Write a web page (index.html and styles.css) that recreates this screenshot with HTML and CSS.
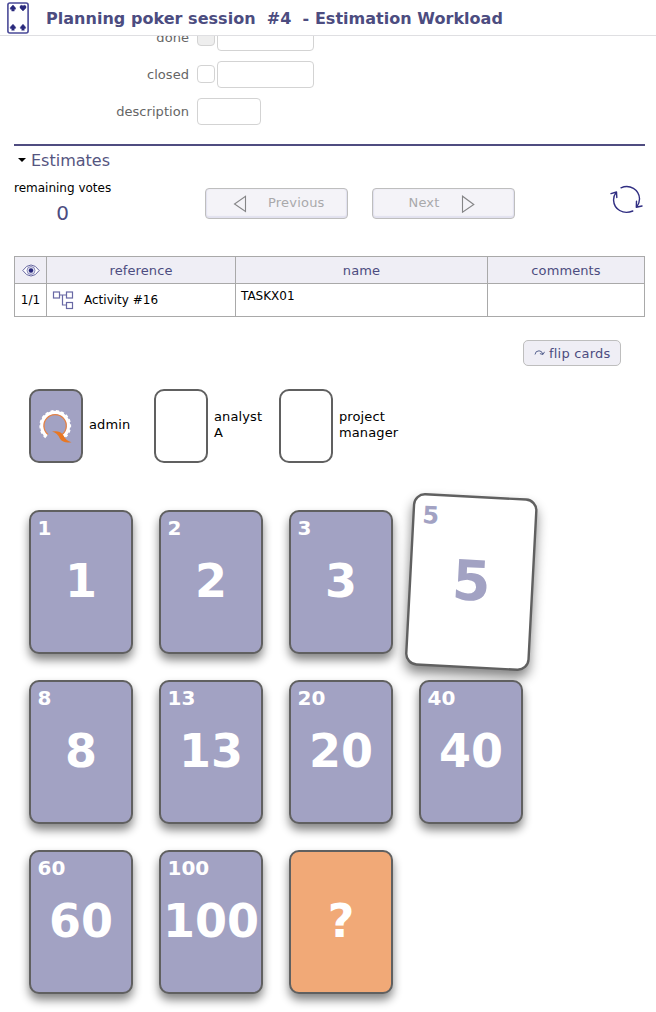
FILE: index.html
```html
<!DOCTYPE html>
<html lang="en">
<head>
<meta charset="utf-8">
<title>Planning poker session</title>
<link rel="stylesheet" href="styles.css">
</head>
<body>
<header class="topbar">
  <svg class="logo" width="22" height="32" viewBox="0 0 22 32">
    <rect x="0.9" y="1" width="20.2" height="30" rx="2" fill="#fff" stroke="#4a4a98" stroke-width="1.6"/>
    <g fill="#28287c" stroke="#28287c" stroke-width=".5" stroke-linejoin="round">
      <path d="M6 3 8.6 6Q9 7.7 6.8 7.6L7.4 9H4.6L5.2 7.6Q2.8 7.7 3.2 6Z"/>
      <path d="M16 9 13.1 6Q12.4 3.7 14.5 3.3 15.6 3.3 16 4.2 16.4 3.3 17.5 3.3 19.6 3.7 18.9 6Z"/>
      <path d="M6 22.2 8.6 25.2Q9 26.9 6.8 26.8L7.4 28.2H4.6L5.2 26.8Q2.8 26.9 3.2 25.2Z"/>
      <path d="M16 22.2 18.6 25.2Q19 26.9 16.8 26.8L17.4 28.2H14.6L15.2 26.8Q12.8 26.9 13.4 25.2Z"/>
    </g>
  </svg>
  <h1 class="title">Planning poker session&nbsp; #4&nbsp; - Estimation Workload</h1>
</header>
<main class="page">
  <section class="form">
    <div class="field"><label>done</label><span class="check off"></span><span class="input wide"></span></div>
    <div class="field"><label>closed</label><span class="check"></span><span class="input wide"></span></div>
    <div class="field"><label>description</label><span class="input"></span></div>
  </section>
  <section class="estimates">
    <h2 class="heading"><span class="caret"></span>Estimates</h2>
    <div class="toolbar">
      <div class="votes"><div class="votes-label">remaining votes</div><div class="count">0</div></div>
      <button class="nav prev"><svg width="14" height="18" viewBox="0 0 14 18"><path d="M12.5 1.2V16.5L1.5 9Z" fill="none" stroke="#858587" stroke-width="1.1"/></svg><span>Previous</span></button>
      <button class="nav next"><span>Next</span><svg width="14" height="18" viewBox="0 0 14 18"><path d="M1.5 1.2V17.2L12.8 9.5Z" fill="none" stroke="#858587" stroke-width="1.1"/></svg></button>
      <svg class="refresh" width="34" height="30" viewBox="0 0 34 30" fill="none" stroke="#302e82" stroke-width="1.4" stroke-linecap="round" stroke-linejoin="round">
        <path d="M11 2.8C20-1.3 29 5 29.5 13.5Q29.7 18 26.8 21.8M26.5 16.3 26.3 22.2 32 21M22.8 26C13 30.2 4 24 3.6 15.4Q3.4 11 6.3 7.2M1 8.6 6.5 7 6.8 12.5"/>
      </svg>
    </div>
    <table class="grid">
      <colgroup><col class="c1"><col class="c2"><col class="c3"><col class="c4"></colgroup>
      <tr class="head">
        <th><svg class="eye" width="18" height="13" viewBox="0 0 18 13"><path d="M.8 6.5Q4.5 1 9 1T17.2 6.5Q13.5 12 9 12T.8 6.5Z" fill="#fff" stroke="#65659f" stroke-width="1"/><circle cx="9" cy="6.5" r="4" fill="#dcdcee" stroke="#7777ae" stroke-width=".8"/><circle cx="9" cy="6.5" r="2.2" fill="#27277a"/></svg></th>
        <th>reference</th><th>name</th><th>comments</th>
      </tr>
      <tr class="row">
        <td class="rank">1/1</td>
        <td class="ref"><div class="ref-in"><svg width="22" height="19" viewBox="0 0 22 19" fill="#fff" stroke="#6868a4" stroke-width="1.2"><path d="M7 4H14M10.5 4V14H14" fill="none"/><rect x="1.5" y="1" width="6" height="6"/><rect x="14.5" y="1" width="6" height="6"/><rect x="14.5" y="11.5" width="6" height="6"/></svg><span>Activity #16</span></div></td>
        <td class="name">TASKX01</td><td></td>
      </tr>
    </table>
    <button class="flip"><svg width="11" height="8" viewBox="0 0 11 8" fill="none" stroke="#576390"><path d="M1 5.5Q1.4 1.8 5 1.8 8 1.8 8.7 5M5.9 4.6 9 5.5 10.5 2.8"/></svg>flip cards</button>
    <div class="players">
      <div class="player"><span class="mini voted">
        <svg width="34" height="36" viewBox="0 0 34 36" fill="none">
          <path d="M7.9 28A13.2 13.2 0 1 1 24.4 28" stroke="#fff" stroke-width="3.6"/>
          <path d="M6.9 29.4A14.9 14.9 0 1 1 25.6 29.4" stroke="#fff" stroke-width="2" stroke-dasharray="3 2.3"/>
          <path d="M9 26.4A11.2 11.2 0 1 1 23.2 26.4" stroke="#e58244" stroke-width="1.3"/>
          <path d="M13 23.6Q21 22 24.3 27.3 27 33 32.5 34.2 24.5 35.8 21 30.8 18.5 25 13 23.6Z" fill="#e87722"/>
        </svg></span><span class="who">admin</span></div>
      <div class="player"><span class="mini"></span><span class="who">analyst A</span></div>
      <div class="player"><span class="mini"></span><span class="who">project manager</span></div>
    </div>
    <div class="deck">
      <div class="card"><span class="corner">1</span><span class="value">1</span></div>
      <div class="card"><span class="corner">2</span><span class="value">2</span></div>
      <div class="card"><span class="corner">3</span><span class="value">3</span></div>
      <div class="card selected"><span class="corner">5</span><span class="value">5</span></div>
      <div class="card"><span class="corner">8</span><span class="value">8</span></div>
      <div class="card"><span class="corner">13</span><span class="value">13</span></div>
      <div class="card"><span class="corner">20</span><span class="value">20</span></div>
      <div class="card"><span class="corner">40</span><span class="value">40</span></div>
      <div class="card"><span class="corner">60</span><span class="value">60</span></div>
      <div class="card"><span class="corner">100</span><span class="value">100</span></div>
      <div class="card unknown"><span class="corner"></span><span class="value">?</span></div>
    </div>
  </section>
</main>
</body>
</html>
```
FILE: styles.css
```css
* { box-sizing: border-box; }
body { margin: 0; height: 1012px; overflow: hidden; background: #fff; color: #000; font: 13px Verdana, "DejaVu Sans", sans-serif; }
.topbar { position: relative; z-index: 1; height: 36px; display: flex; align-items: flex-start; padding: 2px 7px; background: #fff; border-bottom: 1px solid #dfdfe2; }
.logo { flex: none; }
.title { margin: 4px 0 0 17px; font-size: 16px; line-height: 25px; color: #4c4c80; white-space: nowrap; letter-spacing: .03px; }
.page { padding: 0 11px 0 14px; }
.form { margin-top: -12px; display: flex; flex-direction: column; gap: 10px; height: 120px; }
.field { display: flex; align-items: center; height: 27px; color: #656565; }
.field label { width: 175px; margin-right: 8px; text-align: right; letter-spacing: .05px; }
.check { width: 18px; height: 18px; margin: -1px 2px 0 0; border: 1px solid #d3d3d3; border-radius: 4px; }
.off { background: #eee; }
.input { width: 64px; height: 27px; border: 1px solid #d3d3d3; border-radius: 4px; }
.input.wide { width: 97px; }
.estimates { border-top: 2px solid #4f4c80; }
.heading { display: flex; align-items: center; margin: 0; padding: 4px 0 0 4px; height: 24px; font-size: 16px; font-weight: 400; color: #55557f; }
.caret { border: 4px solid transparent; border-top-color: #000; border-bottom: 0; margin-right: 5px; }
.toolbar { display: flex; height: 86px; }
.votes { width: 97px; padding-top: 9px; text-align: center; }
.votes-label { font-size: 12px; line-height: 18px; white-space: nowrap; }
.count { font-size: 20px; line-height: 24px; margin-top: 4px; color: #4c4c80; }
.nav { display: flex; align-items: center; width: 143px; height: 31px; margin: 18px 0 0 94px; padding: 0; font: 13px Verdana, "DejaVu Sans", sans-serif; letter-spacing: .2px; color: #a9a9ab; background: #f4f3f8; border: 1px solid #bebebe; border-radius: 4px; box-shadow: inset 0 -2px 1px #e2e1ef, inset 1px 0 1px #e2e1ef, inset -1px 0 1px #e2e1ef; }
.nav span { margin-top: -3px; }
.prev svg { margin: 1px 21px 0 27px; }
.next { margin-left: 24px; }
.next span { width: 32px; margin-left: 35px; }
.next svg { margin: 1px 0 0 21px; }
.refresh { margin: 15px 0 0 94.5px; }
.grid { width: 631px; table-layout: fixed; border-collapse: collapse; }
.c1 { width: 32px; } .c2 { width: 189px; } .c3 { width: 252px; }
.grid th, .grid td { border: 1px solid #a9a9a9; padding: 0; }
.head th { height: 27px; background: #efeef5; color: #4c4c80; font-weight: 400; letter-spacing: .1px; }
.head .eye { display: block; margin: auto; }
.row td { height: 33px; font-size: 12px; }
.rank { text-align: center; }
.ref-in { display: flex; align-items: center; gap: 10px; padding-left: 5px; }
.row .name { vertical-align: top; padding: 5px; }
.flip { display: flex; align-items: center; gap: 4px; width: 98px; height: 26px; margin: 23px 24px 0 auto; padding: 0 0 0 10px; font: 13px Verdana, "DejaVu Sans", sans-serif; letter-spacing: .2px; color: #4c4c80; background: #efeef5; border: 1px solid #bebebe; border-radius: 5px; white-space: nowrap; }
.players { display: flex; margin: 23px 0 0 15px; }
.player { display: flex; align-items: center; gap: 6px; width: 125px; }
.mini { flex: none; display: flex; align-items: center; justify-content: center; width: 54px; height: 74px; border: 2px solid #606060; border-radius: 10px; }
.voted { background: #a2a2c3; }
.who { width: 60px; line-height: 16px; margin-top: -3px; letter-spacing: .12px; }
.deck { display: grid; grid-template-columns: repeat(4, 104px); grid-auto-rows: 144px; gap: 26px; margin: 47px 0 0 15px; }
.card { position: relative; display: flex; flex-direction: column; border: 2px solid #606060; border-radius: 10px; background: #a2a2c3; color: #fff; font-weight: 700; box-shadow: 0 6px 10px rgba(0, 0, 0, .48); }
.corner { height: 32px; padding: 5px 0 0 6.5px; font-size: 20px; line-height: 22px; }
.value { line-height: 56px; margin-top: 9px; text-align: center; font-size: 46px; white-space: nowrap; }
.selected { background: #fff; color: #a2a2c3; transform: translateX(.3px) rotate(3deg) scale(1.2); }
.unknown { background: #f1a977; }
```
